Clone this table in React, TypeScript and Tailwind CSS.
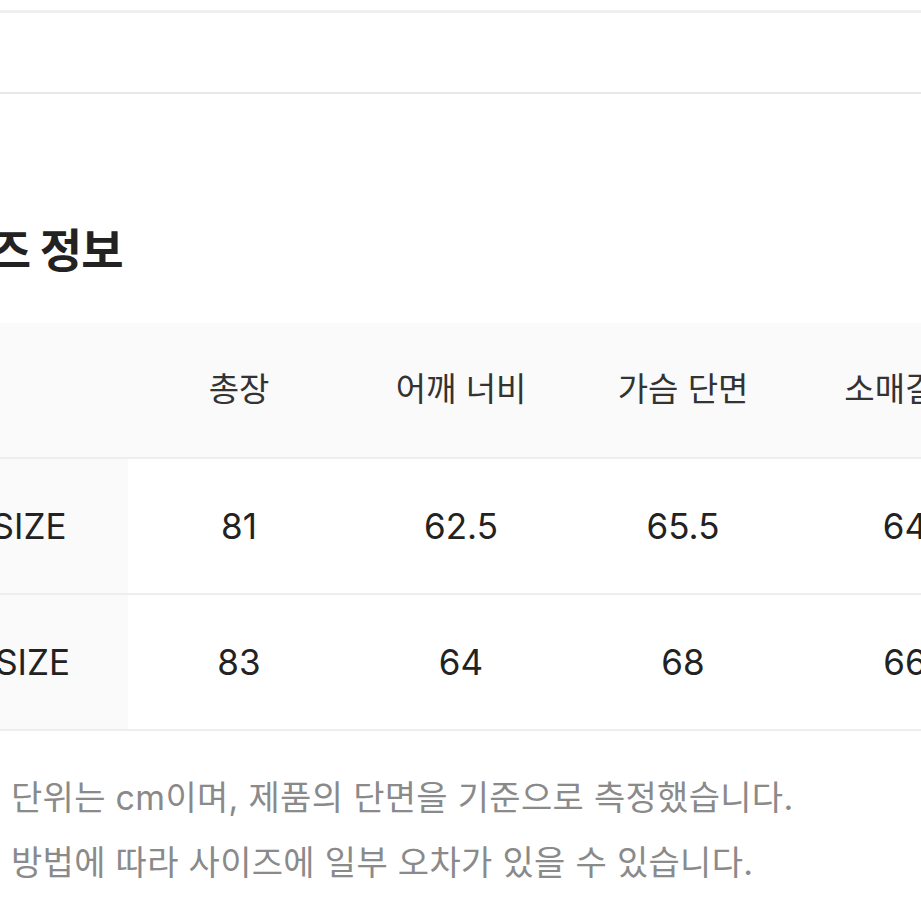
const HEADERS = ['총장', '어깨 너비', '가슴 단면', '소매길이', '밑단 단면'];

const ROWS: { label: string; values: string[] }[] = [
  { label: '1 SIZE', values: ['81', '62.5', '65.5', '64', '60'] },
  { label: '2 SIZE', values: ['83', '64', '68', '66', '62'] },
];

const NOTES = [
  '단위는 cm이며, 제품의 단면을 기준으로 측정했습니다.',
  '방법에 따라 사이즈에 일부 오차가 있을 수 있습니다.',
];

function SizeTable() {
  return (
    <div className="flex flex-col">
      {/* Header */}
      <div className="flex h-[136px] bg-[#fafafa] border-b-2 border-[#eeeeee]">
        <div className="w-[222px] shrink-0" />
        {HEADERS.map(h => (
          <div
            key={h}
            className="w-[222px] shrink-0 flex items-center justify-center text-[33px] text-[#333333]"
          >
            {h}
          </div>
        ))}
      </div>

      {/* Rows */}
      {ROWS.map(row => (
        <div key={row.label} className="flex h-[136px] border-b-2 border-[#eeeeee]">
          <div className="w-[222px] shrink-0 flex items-center justify-center bg-[#fafafa] text-[35px] text-[#222222]">
            {row.label}
          </div>
          {row.values.map((v, i) => (
            <div
              key={i}
              className="w-[222px] shrink-0 flex items-center justify-center text-[35px] text-[#222222]"
            >
              {v}
            </div>
          ))}
        </div>
      ))}
    </div>
  );
}

export default function App() {
  return (
    <div className="w-[921px] h-[921px] overflow-hidden bg-white font-[Inter,'Noto_Sans_CJK_KR',sans-serif]">
      {/* Top dividers */}
      <div className="h-[10px]" />
      <div className="h-[3px] bg-[#efefef]" />
      <div className="h-[79px]" />
      <div className="h-[2px] bg-[#e8e8e8]" />

      <div className="ml-[-94px] w-[1400px]">
        <h2 className="mt-[133px] h-[46px] text-[46px] leading-[46px] font-bold tracking-[-1px] text-[#222222]">
          사이즈 정보
        </h2>

        <div className="mt-[50px]">
          <SizeTable />
        </div>

        <ul className="mt-[34px] pl-[105px] text-[34px] leading-[65px] tracking-[0.3px] text-[#8a8a8a]">
          {NOTES.map(n => (
            <li key={n}>{n}</li>
          ))}
        </ul>
      </div>
    </div>
  );
}
